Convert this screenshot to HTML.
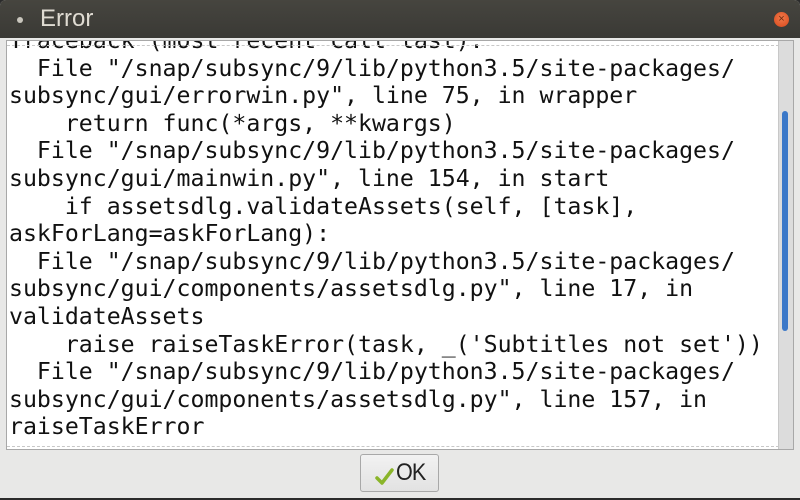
<!DOCTYPE html>
<html><head><style>
body{margin:0;width:800px;height:500px;background:#2b2b2b;overflow:hidden;font-family:"Liberation Sans",sans-serif}
.win{position:absolute;left:0;top:0;width:800px;height:498px;background:#e8e8e7;border-radius:6px 6px 0 0;overflow:hidden}
.title{height:38px;background:linear-gradient(#46453f,#3a3935);color:#dfdbd2;font-size:24px;line-height:38px;position:relative}
.title span{position:absolute;left:40px;top:0}
.dot{position:absolute;left:17px;top:17px;width:6px;height:6px;border-radius:50%;background:#c9c6bd}
.close{position:absolute;left:774px;top:12px;width:15px;height:15px;border-radius:50%;background:radial-gradient(circle at 50% 40%,#f07a4a,#d8471c);color:#6a2a10;font-size:11px;line-height:15px;text-align:center}
.area{position:absolute;left:6px;top:40px;width:788px;height:410px;background:#fff;border:1px solid #a8a8a8;box-sizing:border-box;overflow:hidden}
.dash{position:absolute;left:0;right:14px;height:0;border-top:1px dashed #c8c8c8}
pre{position:absolute;left:2px;top:-14px;margin:0;font-family:"DejaVu Sans Mono",monospace;font-size:23.2px;line-height:27.6px;color:#111}
.track{position:absolute;right:0;top:0;width:14px;height:100%;background:#dcdcdc;border-left:1px solid #c8c8c8}
.thumb{position:absolute;left:3px;top:70px;width:6px;height:220px;background:#3b78c8;border-radius:3px}
.btn{position:absolute;left:360px;top:454px;width:79px;height:38px;border:1px solid #a8a8a8;border-radius:3px;background:linear-gradient(#f2f2f2,#e2e2e2);box-sizing:border-box;font-size:24px;color:#222;line-height:36px}
.btn span{position:absolute;left:35px;top:0;letter-spacing:-1px;transform:scaleX(0.9);transform-origin:left}
</style></head><body>
<div class="win">
<div class="title"><div class="dot"></div><span>Error</span><div class="close">×</div></div>
<div class="area">
<pre>Traceback (most recent call last):
  File "/snap/subsync/9/lib/python3.5/site-packages/
subsync/gui/errorwin.py", line 75, in wrapper
    return func(*args, **kwargs)
  File "/snap/subsync/9/lib/python3.5/site-packages/
subsync/gui/mainwin.py", line 154, in start
    if assetsdlg.validateAssets(self, [task],
askForLang=askForLang):
  File "/snap/subsync/9/lib/python3.5/site-packages/
subsync/gui/components/assetsdlg.py", line 17, in
validateAssets
    raise raiseTaskError(task, _('Subtitles not set'))
  File "/snap/subsync/9/lib/python3.5/site-packages/
subsync/gui/components/assetsdlg.py", line 157, in
raiseTaskError</pre>
<div class="dash" style="top:4px"></div>
<div class="dash" style="top:405px"></div>
<div class="track"><div class="thumb"></div></div>
</div>
<div class="btn"><svg style="position:absolute;left:14px;top:12px" width="20" height="20" viewBox="0 0 20 20"><path d="M2 11 L7 16 L17 3" fill="none" stroke="#8ab52a" stroke-width="3.5" stroke-linecap="round" stroke-linejoin="round"/></svg><span>OK</span></div>
</div>
</body></html>
